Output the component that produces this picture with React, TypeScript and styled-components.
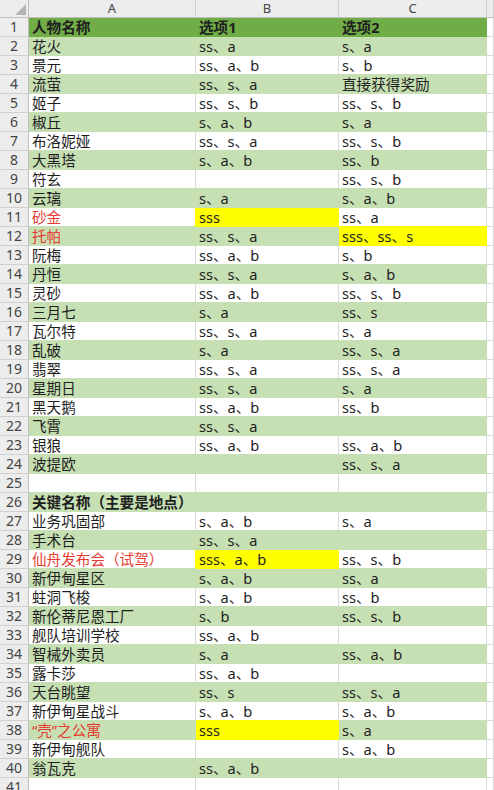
import React from 'react'
import styled, { createGlobalStyle } from 'styled-components'

const GlobalStyle = createGlobalStyle`
  html, body {
    margin: 0;
    padding: 0;
    background: #ffffff;
    overflow: hidden;
  }
  body {
    font-family: "Noto Sans", "Noto Sans CJK SC", sans-serif;
  }
`

const GRID = '#d9d9d9'
const GREEN = '#c6e0b4'
const DARK_GREEN = '#70ad47'
const YELLOW = '#ffff00'

const Sheet = styled.div`
  display: grid;
  grid-template-columns: 29px 167px 143px 148px 1fr;
  grid-template-rows: 18px;
  grid-auto-rows: 19px;
  width: 494px;
  height: 790px;
  overflow: hidden;
`

const Corner = styled.div`
  position: relative;
  background: #ededed;
  border-right: 1px solid #bfbfbf;
  border-bottom: 1px solid #bfbfbf;

  &::after {
    content: '';
    position: absolute;
    right: 2px;
    bottom: 2px;
    width: 0;
    height: 0;
    border-left: 11px solid transparent;
    border-bottom: 11px solid #b4b4b4;
  }
`

const ColHeader = styled.div`
  background: #ededed;
  border-right: 1px solid #d0d0d0;
  border-bottom: 1px solid #bfbfbf;
  color: #444;
  font-size: 13px;
  line-height: 17px;
  text-align: center;
`

const RowHeader = styled.div`
  background: #ededed;
  border-right: 1px solid #bfbfbf;
  border-bottom: 1px solid #d0d0d0;
  color: #444;
  font-size: 14px;
  line-height: 18px;
  text-align: center;
`

const Cell = styled.div<{ $fill?: string; $br: string; $bb: string; $red?: boolean; $bold?: boolean }>`
  background: ${(p) => p.$fill || '#ffffff'};
  border-right: 1px solid ${(p) => p.$br};
  border-bottom: 1px solid ${(p) => p.$bb};
  padding-left: 3px;
  font-size: 14.6px;
  line-height: 19px;
  color: ${(p) => (p.$red ? '#e53a2f' : '#1e1e1e')};
  font-weight: ${(p) => (p.$bold ? 700 : 400)};
  white-space: nowrap;
  overflow: hidden;
`

type Row = {
  a?: string
  b?: string
  c?: string
  red?: boolean
  bold?: boolean
  yb?: boolean
  yc?: boolean
}

const rows: Row[] = [
  { a: '人物名称', b: '选项1', c: '选项2', bold: true },
  { a: '花火', b: 'ss、a', c: 's、a' },
  { a: '景元', b: 'ss、a、b', c: 's、b' },
  { a: '流萤', b: 'ss、s、a', c: '直接获得奖励' },
  { a: '姬子', b: 'ss、s、b', c: 'ss、s、b' },
  { a: '椒丘', b: 's、a、b', c: 's、a' },
  { a: '布洛妮娅', b: 'ss、s、a', c: 'ss、s、b' },
  { a: '大黑塔', b: 's、a、b', c: 'ss、b' },
  { a: '符玄', c: 'ss、s、b' },
  { a: '云璃', b: 's、a', c: 's、a、b' },
  { a: '砂金', b: 'sss', c: 'ss、a', red: true, yb: true },
  { a: '托帕', b: 'ss、s、a', c: 'sss、ss、s', red: true, yc: true },
  { a: '阮梅', b: 'ss、a、b', c: 's、b' },
  { a: '丹恒', b: 'ss、s、a', c: 's、a、b' },
  { a: '灵砂', b: 'ss、a、b', c: 'ss、s、b' },
  { a: '三月七', b: 's、a', c: 'ss、s' },
  { a: '瓦尔特', b: 'ss、s、a', c: 's、a' },
  { a: '乱破', b: 's、a', c: 'ss、s、a' },
  { a: '翡翠', b: 'ss、s、a', c: 'ss、s、a' },
  { a: '星期日', b: 'ss、s、a', c: 's、a' },
  { a: '黑天鹅', b: 'ss、a、b', c: 'ss、b' },
  { a: '飞霄', b: 'ss、s、a' },
  { a: '银狼', b: 'ss、a、b', c: 'ss、a、b' },
  { a: '波提欧', c: 'ss、s、a' },
  {},
  { a: '关键名称（主要是地点）', bold: true },
  { a: '业务巩固部', b: 's、a、b', c: 's、a' },
  { a: '手术台', b: 'ss、s、a' },
  { a: '仙舟发布会（试驾）', b: 'sss、a、b', c: 'ss、s、b', red: true, yb: true },
  { a: '新伊甸星区', b: 's、a、b', c: 'ss、a' },
  { a: '蛀洞飞梭', b: 's、a、b', c: 'ss、b' },
  { a: '新伦蒂尼恩工厂', b: 's、b', c: 'ss、s、b' },
  { a: '舰队培训学校', b: 'ss、a、b' },
  { a: '智械外卖员', b: 's、a', c: 'ss、a、b' },
  { a: '露卡莎', b: 'ss、a、b' },
  { a: '天台眺望', b: 'ss、s', c: 'ss、s、a' },
  { a: '新伊甸星战斗', b: 's、a、b', c: 's、a、b' },
  { a: '“壳”之公寓', b: 'sss', c: 's、a', red: true, yb: true },
  { a: '新伊甸舰队', c: 's、a、b' },
  { a: '翁瓦克', b: 'ss、a、b' },
  {},
]

// fill colour of cell (row index, column 0..3) — column 3 is D, always blank
function fillOf(r: number, c: number): string | undefined {
  const row = rows[r]
  if (!row || c > 2) return undefined
  if (c === 1 && row.yb) return YELLOW
  if (c === 2 && row.yc) return YELLOW
  if (r === 0) return DARK_GREEN
  return r % 2 === 1 ? GREEN : undefined
}

export default function App() {
  return (
    <>
      <GlobalStyle />
      <Sheet>
        <Corner />
        {['A', 'B', 'C', ''].map((l, i) => (
          <ColHeader key={i}>{l}</ColHeader>
        ))}
        {rows.map((row, r) => {
          const texts = [row.a, row.b, row.c, undefined]
          return (
            <React.Fragment key={r}>
              <RowHeader>{r + 1}</RowHeader>
              {texts.map((t, c) => {
                const fill = fillOf(r, c)
                const br = fill || fillOf(r, c + 1) || GRID
                const bb = fill || fillOf(r + 1, c) || GRID
                return (
                  <Cell
                    key={c}
                    $fill={fill}
                    $br={br}
                    $bb={bb}
                    $red={c === 0 && row.red}
                    $bold={row.bold}
                  >
                    {t}
                  </Cell>
                )
              })}
            </React.Fragment>
          )
        })}
      </Sheet>
    </>
  )
}
